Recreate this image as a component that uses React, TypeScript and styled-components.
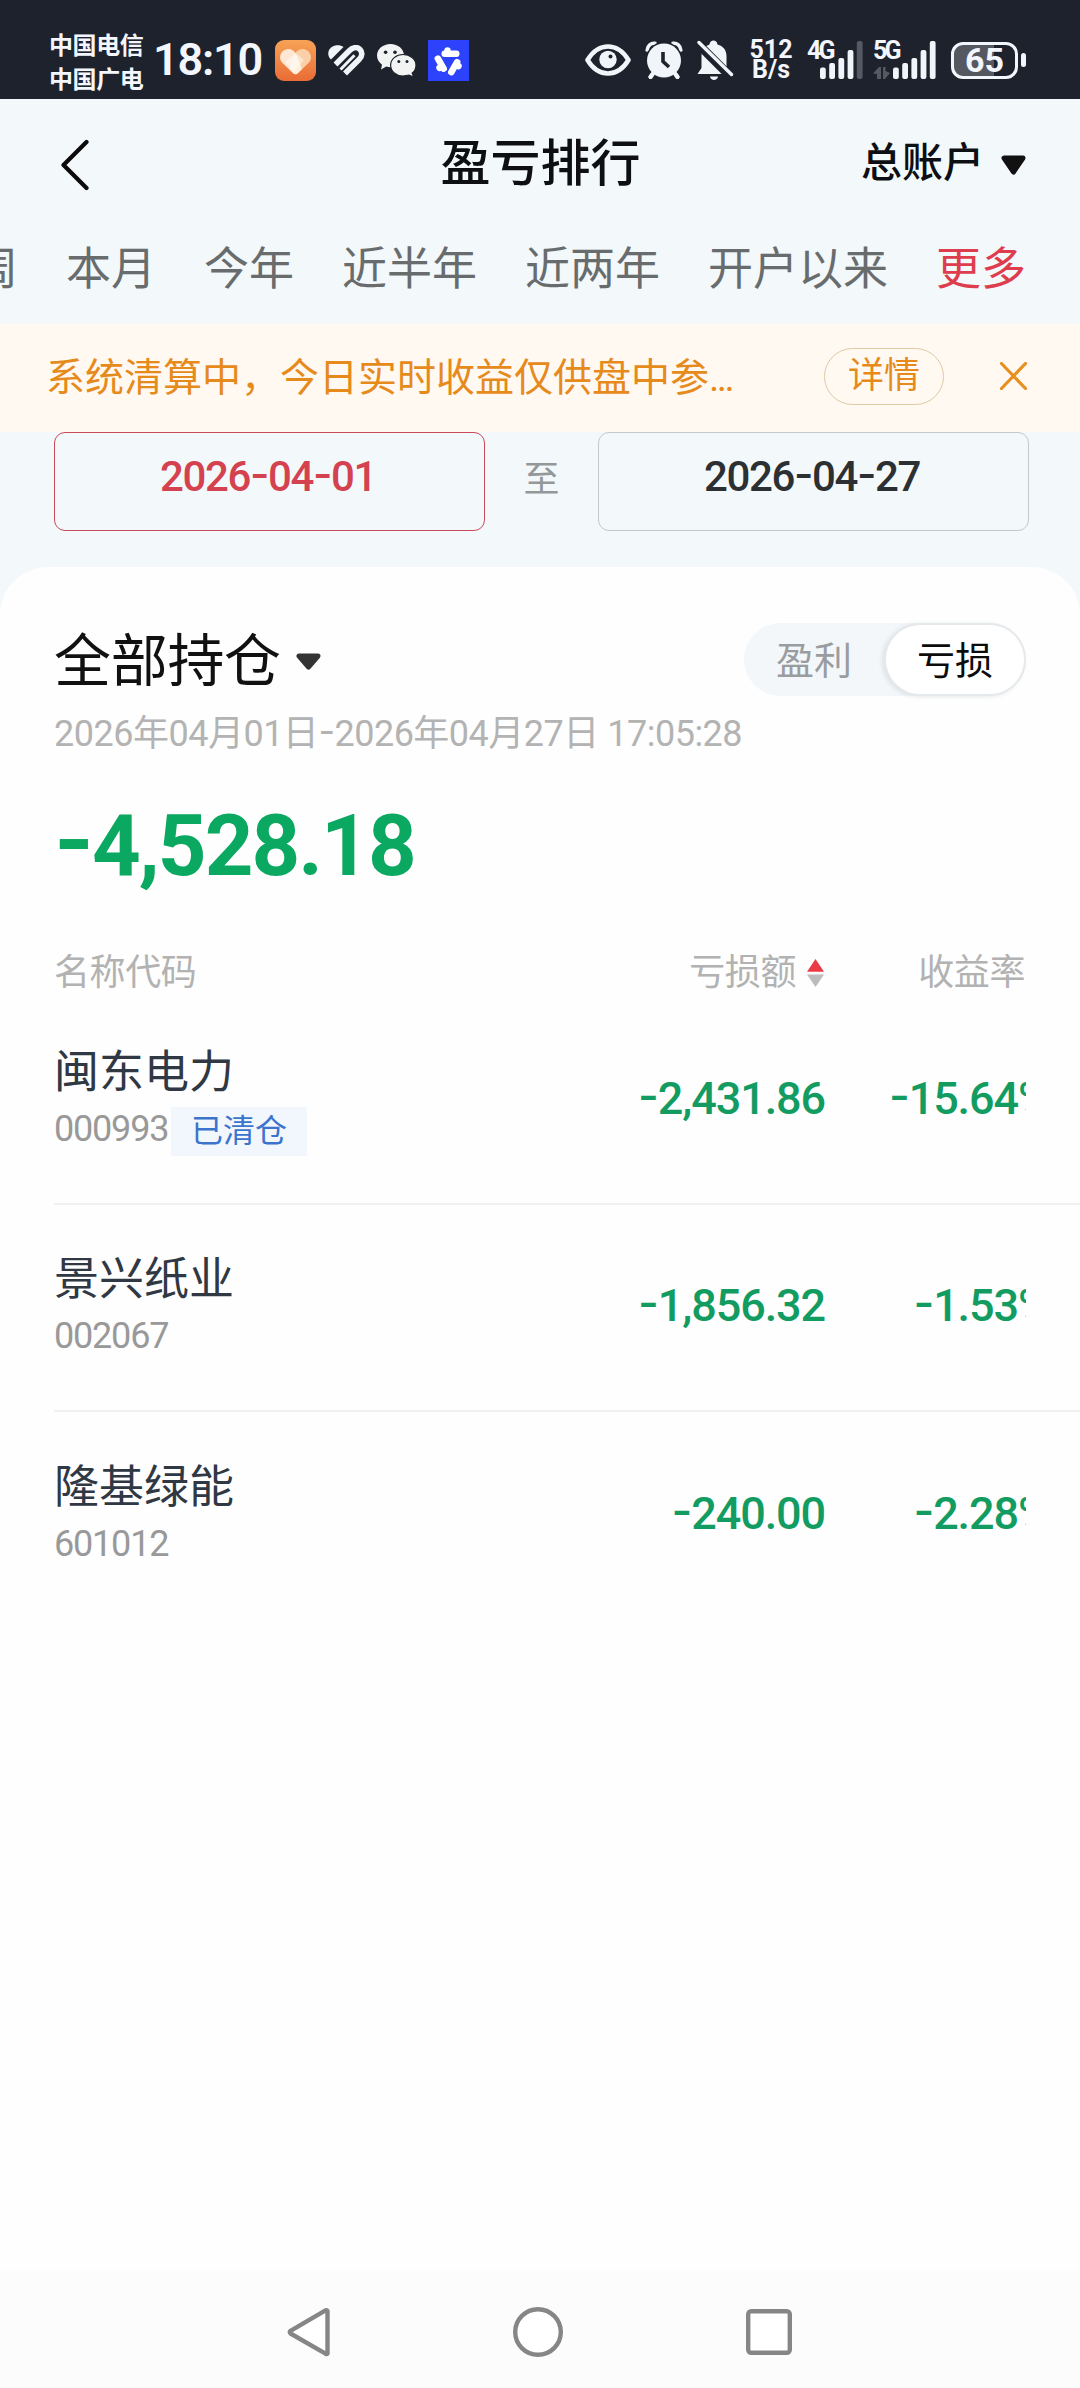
import React from "react";
import styled, { createGlobalStyle } from "styled-components";

const GlobalStyle = createGlobalStyle`
  * { box-sizing: border-box; }
  body {
    margin: 0;
    background: #fefefe;
    font-family: Roboto, "Noto Sans CJK SC", sans-serif;
    -webkit-font-smoothing: antialiased;
  }
`;

const Screen = styled.div`
  width: 1080px;
  height: 2388px;
  display: flex;
  flex-direction: column;
  overflow: hidden;
  background: #f3f8fb;
`;

/* ---------- status bar ---------- */

const StatusBar = styled.div`
  height: 99px;
  flex: none;
  padding: 21px 54px 0 49px;
  display: flex;
  align-items: center;
  background: #1e222d;
  color: #f3f6fc;
  svg { display: block; flex: none; }
`;

const Carriers = styled.div`
  width: 104px;
  padding-top: 1px;
  font: 700 24px/33.5px "Noto Sans CJK SC", sans-serif;
  letter-spacing: -0.4px;
  white-space: nowrap;
`;

const Clock = styled.div`
  width: 122px;
  font-size: 45px;
  font-weight: 600;
  line-height: 50px;
  letter-spacing: -1.2px;
`;

const AppIcons = styled.div`
  display: flex;
  align-items: center;
  gap: 12px;
`;

const SystemIcons = styled.div`
  margin-left: auto;
  display: flex;
  align-items: center;
  gap: 14px;
`;

const NetSpeed = styled.div`
  width: 44px;
  margin-left: 1px;
  font-size: 25px;
  line-height: 20px;
  font-weight: 700;
  text-align: center;
`;

const SignalBox = styled.div<{ $w: number }>`
  position: relative;
  width: ${(p) => p.$w}px;
  height: 38px;
`;

const SignalPair = styled.div`
  display: flex;
  gap: 10px;
`;

const SignalLabel = styled.span`
  position: absolute;
  left: 0;
  top: -3px;
  font-size: 25px;
  line-height: 25px;
  font-weight: 700;
  letter-spacing: -2.8px;
`;

const Battery = styled.div`
  display: flex;
  align-items: center;
  gap: 3px;
  margin-left: 1px;
`;

const BatteryCell = styled.div`
  width: 67px;
  height: 37px;
  padding-bottom: 1px;
  border: 3.5px solid #f3f6fc;
  border-radius: 12px;
  background: linear-gradient(90deg, #555860 65%, transparent 65%);
  display: flex;
  align-items: center;
  justify-content: center;
  font-size: 34px;
  line-height: 30px;
  font-weight: 700;
`;

const BatteryTip = styled.div`
  width: 5px;
  height: 14px;
  border-radius: 2.5px;
  background: #f3f6fc;
`;

function HeartApp() {
  return (
    <svg width="41" height="41" viewBox="0 0 41 41">
      <defs>
        <linearGradient id="ho" x1="0" y1="0" x2="0" y2="1">
          <stop offset="0" stopColor="#f7a356" />
          <stop offset="1" stopColor="#e96c36" />
        </linearGradient>
      </defs>
      <rect width="41" height="41" rx="9" fill="url(#ho)" />
      <path d="M20.500 13 C24 8 30 8 33.500 11.500 C37 15 36.500 20 33.500 23 L22.500 33.500 Q20.500 35 18.500 33.500 L14 29 Z" fill="#fbd0a8" />
      <path d="M20.500 13 C17 8 11 8 7.500 11.500 C4 15 4.500 20 7.500 23 L18.500 33.500 Q20.500 35 22.500 33.500 L27 29 Z" fill="#fff1e2" opacity="0.9" />
      <path d="M20.500 13 L10 22 L19 32 L29 20 Z" fill="#fff" opacity="0.45" />
    </svg>
  );
}

function StripedHeart() {
  return (
    <svg width="37" height="31" viewBox="0 0 37 31">
      <path d="M3 14.500 C-1 11 -0.500 5 3.500 2.200 C7.500 -0.500 12.500 0 15.500 2 Z" fill="#f1f4f8" />
      <path d="M7.500 19.500 L21 6 C24.500 2.300 29 1.600 31.800 4.200 C34.800 7.200 34.200 11 31.500 14 L17 28.500" fill="none" stroke="#f1f4f8" strokeWidth="5.600" />
      <path d="M12.500 24.500 L26.500 10.200" fill="none" stroke="#f1f4f8" strokeWidth="3" />
    </svg>
  );
}

function WeChat() {
  return (
    <svg width="39" height="33" viewBox="0 0 39 33">
      <path d="M13.500 0 C6 0 0 5 0 11.600 C0 15.400 2 18.600 5 20.700 L4 25.400 L9.300 22.600 C10.700 23 12 23.200 13.500 23.200 C21 23.200 27 18 27 11.600 C27 5 21 0 13.500 0 Z" fill="#f1f4f2" />
      <path d="M26 10.500 C19.200 10.500 13.600 15.200 13.600 21.200 C13.600 27.200 19.200 32 26 32 L32 31 L36.500 33 L35.200 29 C37.700 27.200 39 24.300 39 21.200 C39 15.200 33 10.500 26 10.500 Z" fill="#f1f4f2" stroke="#1e222d" strokeWidth="1.200" />
      <circle cx="8.600" cy="8.200" r="1.800" fill="#1e222d" />
      <circle cx="18" cy="8.200" r="1.800" fill="#1e222d" />
      <circle cx="21.800" cy="17.600" r="1.500" fill="#1e222d" />
      <circle cx="30" cy="17.600" r="1.500" fill="#1e222d" />
    </svg>
  );
}

function BlueApp() {
  return (
    <svg width="41" height="41" viewBox="0 0 41 41">
      <rect width="41" height="41" fill="#2c42fb" />
      <g fill="#fff">
        {[0, 120, 240].map((a) => (
          <g key={a} transform={`rotate(${a} 20.500 21.500)`}>
            <rect x="13.500" y="10.500" width="18" height="6.500" rx="3" />
            <circle cx="19.500" cy="10.500" r="3.200" />
          </g>
        ))}
      </g>
    </svg>
  );
}

function Eye() {
  return (
    <svg width="46" height="32" viewBox="0 0 46 32">
      <path d="M2.500 16 C8 7 15 2.500 23 2.500 S38 7 43.500 16 C38 25 31 29.500 23 29.500 S8 25 2.500 16 Z" fill="none" stroke="#f1f4f8" strokeWidth="4.600" strokeLinejoin="round" />
      <circle cx="23" cy="15.500" r="8.700" fill="#f1f4f8" />
      <circle cx="25.500" cy="12.500" r="2" fill="#1e222d" />
    </svg>
  );
}

function Alarm() {
  return (
    <svg width="38" height="38" viewBox="0 0 38 38">
      <g fill="none" stroke="#f1f4f8" strokeLinecap="round">
        <path d="M2.200 9 C2.500 4.500 6 1.800 10 2.300" strokeWidth="3.600" />
        <path d="M35.800 9 C35.500 4.500 32 1.800 28 2.300" strokeWidth="3.600" />
        <path d="M9 31 L5.500 36 M29 31 L32.500 36" strokeWidth="4" />
      </g>
      <circle cx="19" cy="19" r="18.200" fill="#1e222d" />
      <path d="M9 31 L5.500 36 M29 31 L32.500 36" stroke="#f1f4f8" strokeWidth="4" strokeLinecap="round" />
      <circle cx="19" cy="19.500" r="17" fill="#f1f4f8" />
      <path d="M18 11 V20.500 L24 26" fill="none" stroke="#1e222d" strokeWidth="3.600" />
    </svg>
  );
}

function BellOff() {
  return (
    <svg width="37" height="40" viewBox="0 0 37 40">
      <path d="M0.500 34 L4.500 28 V16 C4.500 10 8 6 12.500 4.500 C13 1.500 14.500 0.500 16.500 0.500 S20 1.500 20.500 4.500 C26 6 29.500 10 29.500 16 V27 L34 34 Z" fill="#f1f4f8" />
      <path d="M-1 2 L34 37" stroke="#1e222d" strokeWidth="9" />
      <path d="M2 2.500 L34.500 34.500" stroke="#f1f4f8" strokeWidth="3.400" strokeLinecap="round" />
      <path d="M13 36.500 H21 C20.500 41 13.500 41 13 36.500 Z" fill="#f1f4f8" />
    </svg>
  );
}

function Bars({ x, last }: { x: number; last: string }) {
  const heights = [11.5, 16, 21, 29, 38];
  return (
    <svg width={x + 43} height="38" viewBox={`0 0 ${x + 43} 38`}>
      {heights.map((h, i) => (
        <rect key={h} x={x + i * 9.2} y={38 - h} width="5.800" height={h} rx="2" fill={i === 4 ? last : "#f1f4f8"} />
      ))}
      {x > 15 && (
        <path d="M0 32.500 L6 26 H8 V38 H4 V33 Z M10 26 H12.500 V30 L17 32 L12 38 H10 Z" fill="#555962" />
      )}
    </svg>
  );
}

/* ---------- header ---------- */

const Header = styled.header`
  height: 126px;
  flex: none;
  display: grid;
  grid-template-columns: 1fr auto 1fr;
  align-items: center;
  padding: 0 54px 0 61px;
  color: #0d0f12;
`;

const BackIcon = styled.svg`
  display: block;
  margin-top: 5px;
`;

const Title = styled.h1`
  margin: 0;
  padding-top: 3px;
  transform: translateX(-3px);
  font-size: 50px;
  line-height: 60px;
  font-weight: 500;
`;

const AccountPicker = styled.div`
  display: flex;
  align-items: center;
  justify-content: flex-end;
  gap: 17px;
  padding-top: 1px;
  font-size: 41px;
  line-height: 50px;
  font-weight: 500;
  svg { margin-top: 5px; }
`;

const Tabs = styled.nav`
  height: 99px;
  flex: none;
  padding: 0 54px 10px 0;
  display: flex;
  align-items: center;
  justify-content: flex-end;
  gap: 48px;
  white-space: nowrap;
`;

const Tab = styled.span<{ $active?: boolean }>`
  font-size: 45px;
  line-height: 56px;
  color: ${(p) => (p.$active ? "#dd3d4c" : "#686c6d")};
`;

const Notice = styled.div`
  height: 108px;
  flex: none;
  padding: 0 53px 4px 46px;
  display: flex;
  align-items: center;
  background: #fff9f2;
  color: #e68a1c;
`;

const NoticeText = styled.span`
  flex: 1;
  padding-top: 3px;
  font-size: 39px;
  line-height: 50px;
  white-space: nowrap;
`;

const Ellipsis = styled.span`
  letter-spacing: -2.5px;
`;

const DetailButton = styled.button`
  width: 120px;
  height: 57px;
  margin-right: 56px;
  padding: 0;
  border: 1.5px solid #dfc9a4;
  border-radius: 29px;
  background: none;
  color: inherit;
  font: 400 36px/50px Roboto, "Noto Sans CJK SC", sans-serif;
`;

const DateRange = styled.div`
  height: 135px;
  flex: none;
  padding: 0 51px 0 54px;
  display: flex;
  align-items: flex-start;
  justify-content: space-between;
`;

const DateBox = styled.div<{ $active?: boolean }>`
  width: 431px;
  height: 99px;
  padding-top: 18px;
  padding-right: 3px;
  border: 1.5px solid ${(p) => (p.$active ? "#c84a5b" : "#c4c8cb")};
  border-radius: 11px;
  text-align: center;
  font-size: 42px;
  line-height: 50px;
  letter-spacing: -1.4px;
  font-weight: 500;
  color: ${(p) => (p.$active ? "#d4414f" : "#2c3033")};
`;

const Until = styled.span`
  padding-top: 22px;
  font-size: 36px;
  line-height: 52px;
  color: #949899;
`;

const Dash = styled.span`
  font-family: Inter, sans-serif;
  font-feature-settings: "case";
`;

/* ---------- card ---------- */

const Card = styled.main`
  flex: 1;
  min-height: 0;
  padding-top: 56px;
  border-radius: 48px 48px 0 0;
  background: #fefefe;
`;

const CardHead = styled.div`
  height: 73px;
  padding: 0 54px;
  display: flex;
  align-items: center;
  justify-content: space-between;
`;

const Scope = styled.div`
  display: flex;
  align-items: center;
  gap: 15px;
  padding-top: 3px;
  font-size: 57px;
  line-height: 73px;
  letter-spacing: -0.3px;
  color: #111;
`;

const Toggle = styled.div`
  width: 282px;
  height: 73px;
  display: flex;
  border-radius: 37px;
  background: #f3f7fa;
`;

const Option = styled.span<{ $on?: boolean }>`
  width: ${(p) => (p.$on ? 142 : 140)}px;
  padding-top: 2px;
  display: flex;
  align-items: center;
  justify-content: center;
  border-radius: 37px;
  border: ${(p) => (p.$on ? "2px solid #e6e9eb" : "0")};
  background: ${(p) => (p.$on ? "#fff" : "none")};
  box-shadow: ${(p) => (p.$on ? "-2px 1px 4px rgba(60,70,80,0.12)" : "none")};
  font-size: 38px;
  line-height: 50px;
  color: ${(p) => (p.$on ? "#0c0c0c" : "#9a9d9f")};
`;

const Period = styled.div`
  height: 50px;
  margin: 12px 54px 0;
  font-size: 36px;
  line-height: 50px;
  letter-spacing: -0.5px;
  color: #b3b3b3;
  white-space: nowrap;
`;

const Total = styled.div`
  height: 100px;
  margin: 37px 54px 0;
  font-size: 85px;
  line-height: 100px;
  letter-spacing: -1.9px;
  font-weight: 700;
  color: #0aa860;
`;

const Columns = styled.div`
  display: grid;
  grid-template-columns: 1fr 300px 201px;
  align-items: center;
`;

const TableHead = styled(Columns)`
  height: 50px;
  margin: 53px 54px 0;
  font-size: 36px;
  line-height: 50px;
  letter-spacing: -0.4px;
  color: #b2b2b2;
`;

const HeadCell = styled.span`
  display: flex;
  align-items: center;
  justify-content: flex-end;
  gap: 11px;
  padding-right: 1px;
  white-space: nowrap;
`;

const Row = styled(Columns)<{ $last?: boolean }>`
  height: 207px;
  margin-left: 54px;
  padding-right: 54px;
  border-bottom: ${(p) => (p.$last ? "0" : "2px solid #f1f1f1")};
`;

const Name = styled.div`
  font-size: 45px;
  line-height: 56px;
  color: #2f3843;
`;

const CodeLine = styled.div`
  height: 49px;
  margin-top: 6px;
  display: flex;
  align-items: flex-start;
`;

const Code = styled.span`
  width: 117px;
  font-size: 36px;
  line-height: 44px;
  letter-spacing: -1.2px;
  color: #999;
`;

const Badge = styled.span`
  width: 136px;
  height: 49px;
  padding-bottom: 8px;
  display: flex;
  align-items: center;
  justify-content: center;
  background: #f2f6fd;
  font-size: 32px;
  color: #3a74cd;
`;

const Value = styled.div`
  padding-bottom: 4px;
  font-size: 45px;
  line-height: 56px;
  letter-spacing: -1.1px;
  font-weight: 500;
  text-align: right;
  white-space: nowrap;
  color: #139c62;
`;

const RateCell = styled.div`
  display: flex;
  justify-content: flex-end;
  overflow: hidden;
`;

const Rate = styled(Value)`
  margin-right: -24px;
`;

/* ---------- system navigation ---------- */

const NavBar = styled.footer`
  height: 117px;
  flex: none;
  padding: 4px 288px 0 287px;
  display: flex;
  align-items: center;
  justify-content: space-between;
  background: #fcfcfc;
`;

function Num({ children }: { children: string }) {
  return (
    <>
      {children.split(/(-)/).map((part, i) => (part === "-" ? <Dash key={i}>-</Dash> : part))}
    </>
  );
}

function Caret({ w, h, color }: { w: number; h: number; color: string }) {
  return (
    <svg width={w} height={h} viewBox={`0 0 ${w} ${h}`}>
      <path
        d={`M3 3 H${w - 3} L${w / 2} ${h - 3} Z`}
        fill={color}
        stroke={color}
        strokeWidth="5"
        strokeLinejoin="round"
      />
    </svg>
  );
}

const tabs = ["本周", "本月", "今年", "近半年", "近两年", "开户以来", "更多"];

const holdings = [
  { name: "闽东电力", code: "000993", closed: true, amount: "-2,431.86", rate: "-15.64%" },
  { name: "景兴纸业", code: "002067", closed: false, amount: "-1,856.32", rate: "-1.53%" },
  { name: "隆基绿能", code: "601012", closed: false, amount: "-240.00", rate: "-2.28%" },
];

export default function App() {
  return (
    <>
      <GlobalStyle />
      <Screen>
        <StatusBar>
          <Carriers>
            <div>中国电信</div>
            <div>中国广电</div>
          </Carriers>
          <Clock>18:10</Clock>
          <AppIcons>
            <HeartApp />
            <StripedHeart />
            <WeChat />
            <BlueApp />
          </AppIcons>
          <SystemIcons>
            <Eye />
            <Alarm />
            <BellOff />
            <NetSpeed>
              <div>512</div>
              <div>B/s</div>
            </NetSpeed>
            <SignalPair>
              <SignalBox $w={56}>
                <Bars x={13} last="#555962" />
                <SignalLabel>4G</SignalLabel>
              </SignalBox>
              <SignalBox $w={63}>
                <Bars x={20} last="#f1f4f8" />
                <SignalLabel>5G</SignalLabel>
              </SignalBox>
            </SignalPair>
            <Battery>
              <BatteryCell>65</BatteryCell>
              <BatteryTip />
            </Battery>
          </SystemIcons>
        </StatusBar>

        <Header>
          <BackIcon width="28" height="52" viewBox="0 0 28 52">
            <path d="M25.500 3 L2.500 26 L25.500 49" fill="none" stroke="#0b0b0b" strokeWidth="4.200" strokeLinecap="round" strokeLinejoin="round" />
          </BackIcon>
          <Title>盈亏排行</Title>
          <AccountPicker>
            总账户
            <Caret w={25} h={20} color="#111" />
          </AccountPicker>
        </Header>

        <Tabs>
          {tabs.map((t) => (
            <Tab key={t} $active={t === "更多"}>
              {t}
            </Tab>
          ))}
        </Tabs>

        <Notice>
          <NoticeText>
            系统清算中，今日实时收益仅供盘中参<Ellipsis>...</Ellipsis>
          </NoticeText>
          <DetailButton>详情</DetailButton>
          <svg width="27" height="28" viewBox="0 0 27 28">
            <path d="M1.500 1.500 L25.500 26.500 M25.500 1.500 L1.500 26.500" stroke="#e8901f" strokeWidth="3.200" strokeLinecap="round" />
          </svg>
        </Notice>

        <DateRange>
          <DateBox $active>
            <Num>2026-04-01</Num>
          </DateBox>
          <Until>至</Until>
          <DateBox>
            <Num>2026-04-27</Num>
          </DateBox>
        </DateRange>

        <Card>
          <CardHead>
            <Scope>
              全部持仓
              <Caret w={25} h={17} color="#333" />
            </Scope>
            <Toggle>
              <Option>盈利</Option>
              <Option $on>亏损</Option>
            </Toggle>
          </CardHead>
          <Period>
            <Num>2026年04月01日-2026年04月27日 17:05:28</Num>
          </Period>
          <Total>
            <Num>-4,528.18</Num>
          </Total>
          <TableHead>
            <span>名称代码</span>
            <HeadCell>
              亏损额
              <svg width="17" height="28" viewBox="0 0 17 28">
                <path d="M8.500 0 L17 12.800 H0 Z" fill="#ea3a45" />
                <path d="M8.500 28 L17 15.500 H0 Z" fill="#bcbcbc" />
              </svg>
            </HeadCell>
            <HeadCell>收益率</HeadCell>
          </TableHead>
          {holdings.map((h, i) => (
            <Row key={h.code} $last={i === holdings.length - 1}>
              <div>
                <Name>{h.name}</Name>
                <CodeLine>
                  <Code>{h.code}</Code>
                  {h.closed && <Badge>已清仓</Badge>}
                </CodeLine>
              </div>
              <Value>
                <Num>{h.amount}</Num>
              </Value>
              <RateCell>
                <Rate>
                  <Num>{h.rate}</Num>
                </Rate>
              </RateCell>
            </Row>
          ))}
        </Card>

        <NavBar>
          <svg width="43" height="50" viewBox="0 0 43 50">
            <path d="M40.500 4 V46.500 Q40 47.500 38.500 46.700 L3.500 26.500 Q2 25 3.500 23.800 L38.500 3.400 Q40 3 40.500 4 Z" fill="#fff" stroke="#868686" strokeWidth="4.400" strokeLinejoin="round" />
          </svg>
          <svg width="50" height="50" viewBox="0 0 50 50">
            <circle cx="25" cy="25" r="22.800" fill="#fff" stroke="#868686" strokeWidth="4.400" />
          </svg>
          <svg width="46" height="46" viewBox="0 0 46 46">
            <rect x="2.200" y="2.200" width="41.600" height="41.600" rx="3" fill="#fff" stroke="#868686" strokeWidth="4.400" />
          </svg>
        </NavBar>
      </Screen>
    </>
  );
}
